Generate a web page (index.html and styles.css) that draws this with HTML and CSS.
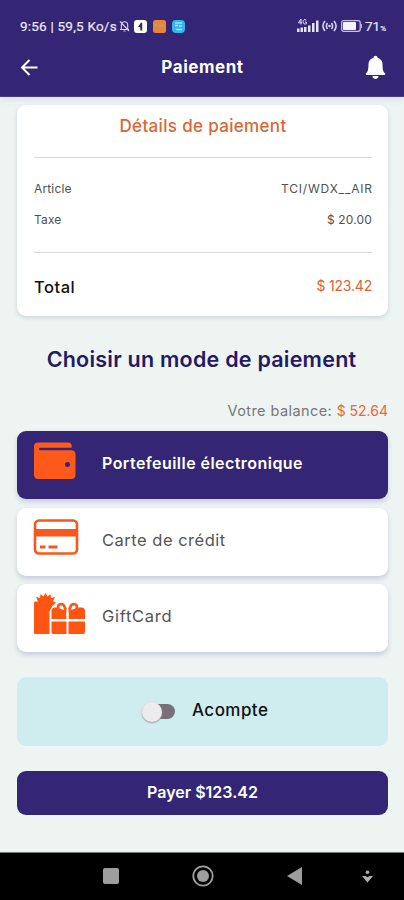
FILE: index.html
```html
<!DOCTYPE html>
<html lang="fr">
<head>
  <meta charset="UTF-8">
  <meta name="viewport" content="width=device-width, initial-scale=1">
  <title>Paiement</title>
  <link rel="stylesheet" href="styles.css">
</head>
<body>

  <header class="header">
    <div class="status">
      <span class="clock">9:56 | 59,5 Ko/s</span>
      <svg class="muted" width="11" height="12" viewBox="0 0 11 12" fill="none" stroke="#d5d0ec" stroke-width="1.1">
        <path d="M1 9.5h9M2.3 9V5.2C2.3 3 3.6 1.8 5.5 1.8S8.7 3 8.7 5.2V9M4.5 11h2M1 1.5l9 9.5"/>
      </svg>
      <svg class="app" width="13" height="13" viewBox="0 0 13 13">
        <rect width="13" height="13" rx="3" fill="#fff"/>
        <path d="M7 2.5L4 7h2.2v3.5h2V3z" fill="#333"/>
      </svg>
      <svg class="app" width="13" height="13" viewBox="0 0 13 13">
        <rect width="13" height="13" rx="2.5" fill="#e8853a"/>
        <path d="M2 4l2 2M4 4L2 6M6 5.5h5" stroke="#b9a07c" stroke-width="1.3"/>
      </svg>
      <svg class="app" width="13" height="13" viewBox="0 0 13 13">
        <rect width="13" height="13" rx="4" fill="#35b6ec"/>
        <path d="M3 3h7M3 5.5h3M7 6h3M4 9.5h6" stroke="#a5e2fa" stroke-width="1.5"/>
      </svg>
      <span class="spacer"></span>
      <svg class="signal" width="22" height="14" viewBox="0 0 22 14" fill="#e6e3f3">
        <path d="M3.8 0L1.5 3.8h3.2M4 0v5.5M9.2 1.2C7.5-.2 6 .9 6 2.8s1.8 3 3.3 1.9V3H8" fill="none" stroke="#e6e3f3"/>
        <path d="M0 9.500h2.500V13H0zM3.500 8.500H6V13H3.500zM7 8h2.500v5H7zM11 6.500h2.500V13H11zM15 4h2.500v9H15zM19 1.500h2.500V13H19z"/>
      </svg>
      <svg class="hotspot" width="15" height="12" viewBox="0 0 15 12" fill="none" stroke="#d5d0ec" stroke-width="1.6">
        <path d="M3 1C.5 4 .5 8 3 11M5.500 3C4 5 4 7 5.500 9M12 1c2.500 3 2.500 7 0 10M9.500 3C11 5 11 7 9.500 9"/>
        <circle cx="7.500" cy="6" r="1.300" fill="#d5d0ec" stroke="none"/>
      </svg>
      <svg class="battery" width="21" height="12" viewBox="0 0 21 12">
        <rect x=".7" y=".7" width="18.500" height="10.600" rx="2" fill="none" stroke="#c5bfe2" stroke-width="1.3"/>
        <rect x="2" y="2" width="13" height="8" rx="1" fill="#f4f3fa"/>
        <path d="M20.300 4v4" stroke="#c5bfe2" stroke-width="1.200"/>
      </svg>
      <span class="percent">71<small>%</small></span>
    </div>
    <div class="navbar">
      <svg width="18" height="18" viewBox="0 0 18 18" fill="none" stroke="#fff" stroke-width="2">
        <path d="M17.500 9.500H2.500M9.500 2L2 9.500l7.500 7.500"/>
      </svg>
      <h1>Paiement</h1>
      <svg class="bell" width="21" height="25" viewBox="0 0 22 26" fill="#fff">
        <path d="M11 .8c1.300 0 2 .8 2.100 2 3.500 1 5.300 3.700 5.300 7.200 0 5 .6 7.200 2.600 9 .6.700.2 1.800-.8 1.800H1.800C.8 20.800.4 19.700 1 19c2-1.800 2.600-4 2.600-9 0-3.500 1.800-6.200 5.300-7.200C9 1.600 9.700.8 11 .8z"/>
        <path d="M7.800 22h6.400c0 1.800-1.400 3-3.200 3s-3.200-1.200-3.200-3z"/>
      </svg>
    </div>
  </header>

  <main class="content">
    <section class="card">
      <h2>Détails de paiement</h2>
      <div class="lines">
        <div class="line"><span>Article</span><span class="code">TCI/WDX__AIR</span></div>
        <div class="line"><span>Taxe</span><span>$ 20.00</span></div>
      </div>
      <div class="total"><span>Total</span><span class="amount">$ 123.42</span></div>
    </section>

    <h2 class="choose">Choisir un mode de paiement</h2>
    <p class="balance">Votre balance: <span>$ 52.64</span></p>

    <div class="options">
      <div class="option selected">
        <svg width="54" height="44" viewBox="0 0 54 44">
          <path d="M5 3.500h30.500c2 0 3.200 1.300 3.200 3.200V8.700H7C5.500 8.700 5.500 11.200 7 11.200H38c3 0 4.500 1.500 4.500 4V35.500c0 3-1.500 4.500-4.500 4.500H5.500C2.500 40 1 38.500 1 35.500V7.500c0-2.500 1.500-4 4-4z" fill="#ff5a1c"/>
          <circle cx="34.500" cy="25.500" r="2.500" fill="#342674"/>
        </svg>
        <span>Portefeuille électronique</span>
      </div>
      <div class="option">
        <svg width="54" height="44" viewBox="0 0 54 44">
          <rect x="2" y="4.500" width="42" height="33" rx="4" fill="none" stroke="#f9581d" stroke-width="2.600"/>
          <path d="M2 13h42v7.500H2z" fill="#f9581d"/>
          <path d="M7 31h5.500M15.500 31h9" stroke="#f9581d" stroke-width="3"/>
        </svg>
        <span class="credit">Carte de crédit</span>
      </div>
      <div class="option">
        <svg width="54" height="44" viewBox="0 0 54 44" fill="#ff5512">
          <path d="M2.500 9.500H5L3 5l4 1L7.500 2l3 2.500L12.500 1l2 3.500L17.500 2l.5 4 4-1-2 4.300 3 1.200-4 4-2.500 5V42H2.500C1.500 42 1 41.500 1 40.500V11c0-1 .5-1.500 1.500-1.500z"/>
          <path d="M18.500 27v-8c0-2.300 1.200-3.500 3.500-3.500h11.500V27zM35.500 27V15.500H48.500c2.300 0 3.500 1.200 3.500 3.500v8z"/>
          <path d="M18.500 29.500h15V42H20.500c-1.300 0-2-.7-2-2zM35.500 29.500H52V40c0 1.300-.7 2-2 2H35.500z"/>
          <path d="M33 19c-5 .5-8-1.300-8-4s4-4 6-1.500zM36 19c5 .5 8-1.300 8-4s-4-4-6-1.500z" fill="#fff" stroke="#ff5512" stroke-width="2.600"/>
          <path d="M34.500 17v10" stroke="#fff" stroke-width="2"/>
        </svg>
        <span class="gift">GiftCard</span>
      </div>
    </div>

    <div class="deposit">
      <span class="switch"></span>
      <span class="deposit-label">Acompte</span>
    </div>

    <button class="pay">Payer $123.42</button>
  </main>

  <footer class="system">
    <svg width="16" height="16" viewBox="0 0 16 16"><rect width="16" height="16" rx="2" fill="#9e9e9e"/></svg>
    <svg class="home" width="22" height="22" viewBox="0 0 22 22">
      <circle cx="11" cy="11" r="9.700" fill="none" stroke="#9e9e9e" stroke-width="1.800"/>
      <circle cx="11" cy="11" r="6" fill="#9e9e9e"/>
    </svg>
    <svg class="back" width="15" height="18" viewBox="0 0 15 18"><path d="M15 0v18L0 9z" fill="#9e9e9e"/></svg>
    <svg class="hide" width="11" height="13" viewBox="0 0 11 13" fill="#b0b0b0">
      <circle cx="5.500" cy="2.300" r="1.800"/>
      <path d="M0 6h3.500l2 1.200 2-1.200H11l-5.500 6.500z"/>
    </svg>
  </footer>

</body>
</html>
```
FILE: styles.css
```css
* { box-sizing: border-box; }
body { margin: 0; height: 900px; display: flex; flex-direction: column; background: #edf4f2; font-family: Inter, "Noto Sans", sans-serif; color: #111; }
h1, h2, p { margin: 0; }
svg { display: block; flex: none; }

.header { height: 97px; padding: 16px 18px 0 20px; background: #342674; border-bottom: 1px solid #493b83; color: #fff; box-shadow: 0 2px 7px #dcdcef; }
.status { height: 20px; display: flex; align-items: center; font-family: Roboto, sans-serif; font-size: 13.5px; color: #e9e6f5; -webkit-text-stroke: .2px #e9e6f5; }
.clock { letter-spacing: .22px; white-space: nowrap; }
.muted { margin-left: 2px; }
.app { margin-left: 4px; }
.app + .app { margin-left: 6px; }
.spacer { flex: 1; }
.hotspot { margin-left: 3px; }
.battery { margin: 0 3px 0 4px; }
.percent small { font-size: 8px; }
.navbar { height: 62px; display: flex; align-items: center; justify-content: space-between; }
.navbar h1 { font-size: 17px; font-weight: 700; letter-spacing: .55px; line-height: 24px; padding: 0 0 1px 2px; }
.bell { margin-top: 1px; }

.content { flex: 1; padding: 8px 16px 0 17px; }
.card { height: 211px; padding: 0 16px 0 17px; background: #fff; border-radius: 9px; box-shadow: 0 2px 4px #cfd4dc; }
.card h2 { height: 52px; line-height: 42px; text-align: center; font-size: 17px; font-weight: 500; letter-spacing: .33px; color: #dc6534; }
.lines { height: 96px; padding-top: 16px; border-top: 1px solid #d5d8d8; border-bottom: 1px solid #d5d8d8; }
.line { display: flex; justify-content: space-between; line-height: 30.5px; font-size: 12px; letter-spacing: .15px; color: #505050; }
.code { letter-spacing: .8px; margin-right: -.8px; }
.total { display: flex; justify-content: space-between; line-height: 68px; font-size: 16.5px; font-weight: 500; letter-spacing: .5px; }
.amount { font-size: 14px; font-weight: 400; line-height: 65px; letter-spacing: -.2px; color: #e26132; }

.choose { margin: 26px -9px 0 -11px; line-height: 34px; text-align: center; font-size: 21.5px; font-weight: 600; letter-spacing: .23px; white-space: nowrap; color: #251965; }
.balance { margin-top: 24px; line-height: 22px; text-align: right; font-size: 14.5px; letter-spacing: .42px; color: #777; }
.balance span { color: #f26532; font-size: 14px; letter-spacing: 0; }

.options { margin-top: 9px; display: flex; flex-direction: column; gap: 8.5px; }
.option { height: 68px; padding: 8px 16px; display: flex; gap: 15px; background: #fff; border-radius: 9px; box-shadow: 0 3px 5px #cbccdd; font-size: 16.5px; color: #555; }
.option span { line-height: 48px; letter-spacing: .5px; }
.option .gift { letter-spacing: .7px; }
.option.selected { background: #342674; color: #fff; font-size: 16px; font-weight: 600; }
.option.selected span { letter-spacing: .45px; }

.deposit { margin-top: 25px; height: 69px; padding: 0 0 3px 126px; display: flex; align-items: center; gap: 17px; background: #cfecef; border-radius: 9px; font-size: 17px; font-weight: 500; }
.deposit-label { letter-spacing: .45px; }
.switch { width: 32px; height: 15px; margin-top: 3px; display: flex; align-items: center; background: #777078; border-radius: 8px; }
.switch::before { content: ""; width: 20px; height: 20px; flex: none; margin-left: -1px; border-radius: 50%; background: #ececee; box-shadow: 0 1px 2px #9a9a9a; }
.pay { display: block; width: 100%; height: 44px; margin-top: 25px; padding: 0 0 3px; border: 0; border-radius: 9px; background: #342674; color: #fff; font-family: inherit; font-size: 16px; font-weight: 600; }

.system { height: 48px; padding: 0 0 1px 103px; display: flex; align-items: center; background: #000; border-top: 1px solid #777; }
.home { margin-left: 73px; }
.back { margin-left: 73px; }
.hide { margin-left: 60px; }
```
